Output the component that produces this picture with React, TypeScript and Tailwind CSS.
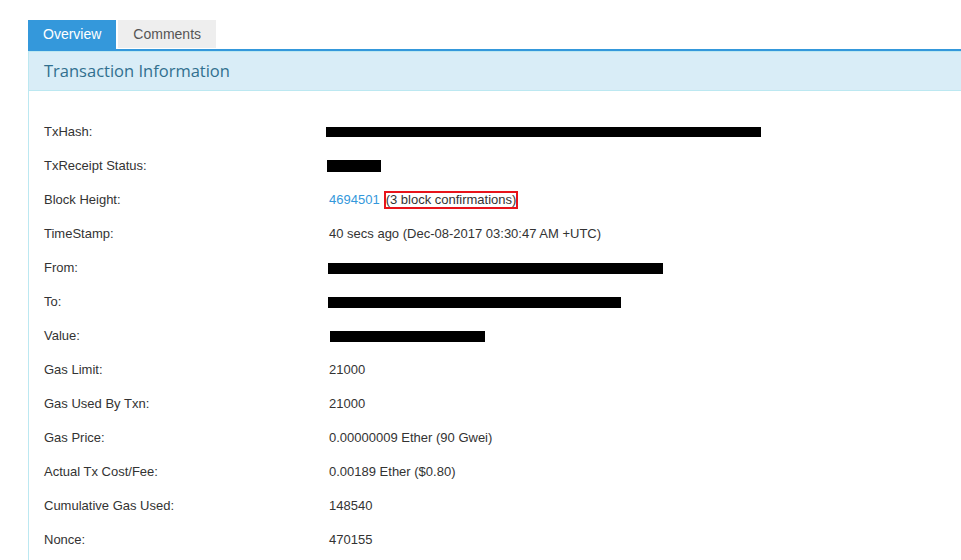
import React from "react";

type Row = {
  label: string;
  value: React.ReactNode;
};

// blacked-out value, offset/size in px
const Hidden = ({ w, h, ml = 0 }: { w: number; h: number; ml?: number }) => (
  <span
    className="inline-block bg-black"
    style={{ width: w, height: h, marginLeft: ml }}
  />
);

const rows: Row[] = [
  { label: "TxHash:", value: <Hidden w={435} h={10} ml={-3} /> },
  { label: "TxReceipt Status:", value: <Hidden w={54} h={12} ml={-2} /> },
  {
    label: "Block Height:",
    value: (
      <span className="flex items-center">
        <a className="text-[#3498db]">4694501</a>
        <span className="w-[4px]" />
        <span className="border-2 border-[#e8141b] leading-[14px]">
          (3 block confirmations)
        </span>
      </span>
    ),
  },
  { label: "TimeStamp:", value: "40 secs ago (Dec-08-2017 03:30:47 AM +UTC)" },
  { label: "From:", value: <Hidden w={335} h={11} ml={-1} /> },
  { label: "To:", value: <Hidden w={293} h={11} ml={-1} /> },
  { label: "Value:", value: <Hidden w={155} h={11} ml={1} /> },
  { label: "Gas Limit:", value: "21000" },
  { label: "Gas Used By Txn:", value: "21000" },
  { label: "Gas Price:", value: "0.00000009 Ether (90 Gwei)" },
  { label: "Actual Tx Cost/Fee:", value: "0.00189 Ether ($0.80)" },
  { label: "Cumulative Gas Used:", value: "148540" },
  { label: "Nonce:", value: "470155" },
];

const App = () => {
  return (
    <div className="w-[961px] h-[560px] overflow-hidden bg-white pt-[20px] pl-[28px] font-['Liberation_Sans',Arial,sans-serif] text-[13px] text-[#333]">
      {/* tabs */}
      <div className="flex w-[960px] gap-[2px] border-b-2 border-[#3498db]">
        <div className="h-[29px] px-[15px] flex items-center bg-[#3498db] text-white text-[14px]">
          Overview
        </div>
        <div className="h-[28px] px-[15px] flex items-center bg-[#eeeeee] text-[#555] text-[14px]">
          Comments
        </div>
      </div>

      {/* panel */}
      <div className="w-[960px] min-h-[600px] border border-[#bce8f1]">
        <div className="h-[39px] flex items-center px-[15px] bg-[#d9edf7] border-b border-[#bce8f1] text-[#31708f] text-[16.5px] font-['Open_Sans',sans-serif]">
          Transaction Information
        </div>
        <div className="pt-[24px] pl-[15px]">
          {rows.map((r) => (
            <div key={r.label} className="flex h-[34px] items-center">
              <div className="w-[285px]">{r.label}</div>
              <div className="flex items-center">{r.value}</div>
            </div>
          ))}
        </div>
      </div>
    </div>
  );
};

export default App;
